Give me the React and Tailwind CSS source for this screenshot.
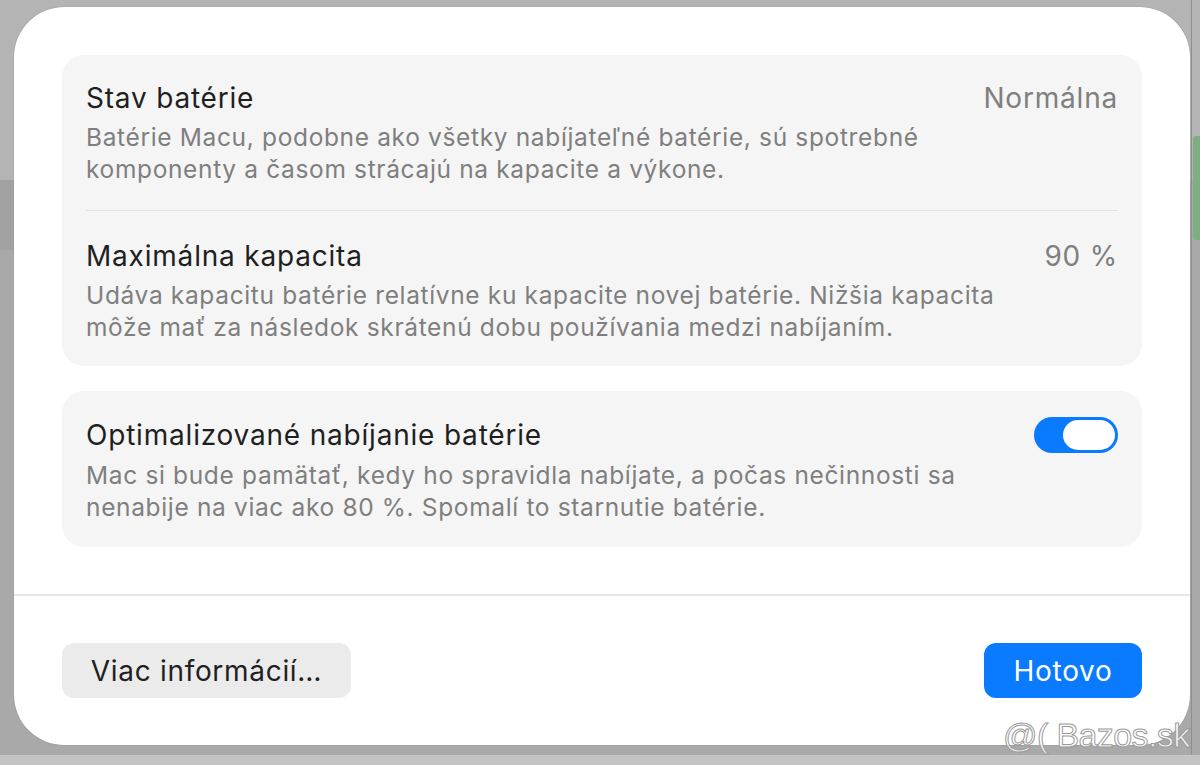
export default function App() {
  const font = { fontFamily: 'Inter, "Noto Sans", sans-serif' };
  return (
    <div className="relative w-[1200px] h-[765px] overflow-hidden bg-[#a9a9a9]" style={font}>
      {/* background hints */}
      <div className="absolute left-0 top-0 w-[1200px] h-[180px] bg-[#b4b4b4]" />
      <div className="absolute left-0 top-[180px] w-[14px] h-[70px] bg-[#a2a2a2]" />
      <div className="absolute left-[1191px] top-0 w-px h-[765px] bg-[#8e8e8e]" />
      <div className="absolute left-[1193px] top-[136px] w-[7px] h-[104px] rounded-l-[3px] bg-[#7fae85]" />
      <div className="absolute left-0 top-[755px] w-[1200px] h-[10px] bg-[#c4c4c4]" />

      <div className="relative ml-[14px] mt-[7px] w-[1176px] h-[738px] rounded-[50px] bg-white flex flex-col shadow-[0_0_1px_rgba(0,0,0,0.4)]">
        <div className="px-[48px] pt-[48px] flex flex-col gap-[25px]">
          {/* card 1 */}
          <div className="w-[1080px] rounded-[22px] bg-[#f5f5f5] px-[24px] pt-[26px] pb-[23px] flex flex-col">
            <div className="flex justify-between">
              <div className="text-[28px] leading-[34px] text-[#1f1f1f] tracking-[0.8px]">Stav batérie</div>
              <div className="text-[28px] leading-[34px] text-[#7f7f7f] tracking-[0.8px]">Normálna</div>
            </div>
            <div className="mt-[6px] text-[24.5px] leading-[32px] text-[#7f7f7f] tracking-[0.65px] w-[940px]">
              Batérie Macu, podobne ako všetky nabíjateľné batérie, sú spotrebné komponenty a časom strácajú na kapacite a výkone.
            </div>
            <div className="mt-[25px] h-px bg-[#e2e2e2]" />
            <div className="mt-[28px] flex justify-between">
              <div className="text-[28px] leading-[34px] text-[#1f1f1f] tracking-[0.8px]">Maximálna kapacita</div>
              <div className="text-[28px] leading-[34px] text-[#7f7f7f] tracking-[0.8px]">90 %</div>
            </div>
            <div className="mt-[6px] text-[24.5px] leading-[32px] text-[#7f7f7f] tracking-[0.65px] w-[940px]">
              Udáva kapacitu batérie relatívne ku kapacite novej batérie. Nižšia kapacita môže mať za následok skrátenú dobu používania medzi nabíjaním.
            </div>
          </div>

          {/* card 2 */}
          <div className="w-[1080px] rounded-[22px] bg-[#f5f5f5] px-[24px] pt-[26px] pb-[24px] flex flex-col">
            <div className="flex justify-between items-center">
              <div className="text-[28px] leading-[34px] text-[#1f1f1f] tracking-[0.8px]">Optimalizované nabíjanie batérie</div>
              <div className="w-[84px] h-[36px] rounded-full bg-[#0a7aff] p-[3px] flex justify-end">
                <div className="w-[52px] h-[30px] rounded-full bg-white" />
              </div>
            </div>
            <div className="mt-[6px] text-[24.5px] leading-[32px] text-[#7f7f7f] tracking-[0.65px] w-[940px]">
              Mac si bude pamätať, kedy ho spravidla nabíjate, a počas nečinnosti sa nenabije na viac ako 80 %. Spomalí to starnutie batérie.
            </div>
          </div>
        </div>

        <div className="mt-[47px] h-[2px] bg-[#e6e6e6]" />

        <div className="px-[48px] pt-[47px] flex justify-between">
          <div className="w-[289px] h-[55px] rounded-[12px] bg-[#ebebeb] flex items-center justify-center text-[28px] text-[#1f1f1f] tracking-[0.7px]">
            Viac informácií…
          </div>
          <div className="w-[158px] h-[55px] rounded-[12px] bg-[#0a7aff] flex items-center justify-center text-[28px] text-white tracking-[0.7px]">
            Hotovo
          </div>
        </div>
      </div>

      {/* watermark */}
      <div
        className="absolute left-[1003px] top-[716px] whitespace-nowrap text-[34px] leading-[38px] text-[rgba(255,255,255,0.85)] [-webkit-text-stroke:1px_#9a9a9a] tracking-[-0.6px]"
        style={{ fontFamily: '"Liberation Sans", Arial, sans-serif' }}
      >
        @( Bazos.sk
      </div>
    </div>
  );
}
